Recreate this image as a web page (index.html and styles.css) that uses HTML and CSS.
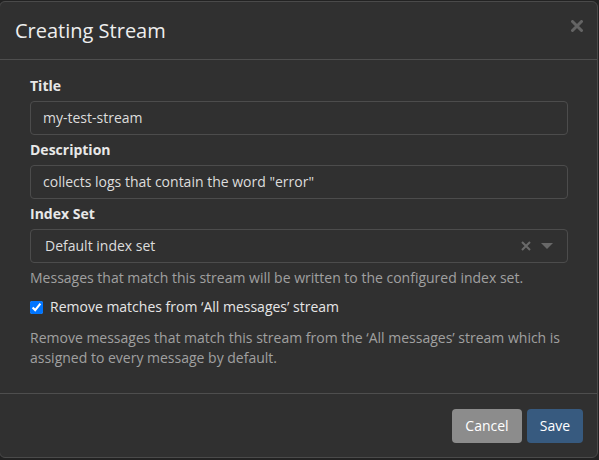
FILE: index.html
```html
<!DOCTYPE html>
<html>
<head>
<meta charset="utf-8">
<link rel="stylesheet" href="styles.css">
</head>
<body>
<div class="modal">
  <div class="modal-header">
    <h4 class="modal-title">Creating Stream</h4>
    <button class="close" aria-label="Close">
      <svg width="12" height="12" viewBox="0 0 12 12"><path d="M1.5 1.5 L10.5 10.5 M10.5 1.5 L1.5 10.5" stroke="#646464" stroke-width="3" stroke-linecap="round"/></svg>
    </button>
  </div>
  <div class="modal-body">
    <div class="form-group">
      <label class="label">Title</label>
      <div class="input">my-test-stream</div>
    </div>
    <div class="form-group">
      <label class="label">Description</label>
      <div class="input">collects logs that contain the word "error"</div>
    </div>
    <div class="form-group">
      <label class="label">Index Set</label>
      <div class="select">
        <span class="select-value">Default index set</span>
        <svg class="select-clear" width="10" height="10" viewBox="0 0 10 10"><path d="M1 1 L9 9 M9 1 L1 9" stroke="#6a6a6a" stroke-width="2"/></svg>
        <span class="select-caret"></span>
      </div>
      <p class="help">Messages that match this stream will be written to the configured index set.</p>
    </div>
    <div class="checkbox-row">
      <input type="checkbox" checked>
      <span>Remove matches from ‘All messages’ stream</span>
    </div>
    <p class="help help-block2">Remove messages that match this stream from the ‘All messages’ stream which is assigned to every message by default.</p>
  </div>
  <div class="modal-footer">
    <button class="btn btn-cancel">Cancel</button>
    <button class="btn btn-save">Save</button>
  </div>
</div>
</body>
</html>
```
FILE: styles.css
```css
html, body {
  margin: 0;
  padding: 0;
  background: #222222;
  font-family: "Open Sans", "Noto Sans", sans-serif;
  font-size: 14px;
  line-height: 20px;
  color: #dddddd;
}
.modal {
  box-sizing: border-box;
  margin: 1px 0 0 -1px;
  width: 599px;
  height: 457px;
  background: #303030;
  border: 1px solid #4a4a4a;
  border-radius: 6px;
  display: flex;
  flex-direction: column;
}
.modal-header {
  height: 58px;
  box-sizing: border-box;
  padding: 0 14px 0 15px;
  border-bottom: 1px solid #4e4e4e;
  display: flex;
  align-items: center;
  justify-content: space-between;
}
.modal-title {
  margin: 0;
  font-size: 20px;
  font-weight: normal;
  color: #eeeeee;
  line-height: 26px;
}
.close {
  background: none;
  border: 0;
  padding: 0;
  margin-top: -10px;
  display: flex;
}
.modal-body {
  flex: 1;
  padding: 16px 29px 0 30px;
}
.form-group {
  margin-bottom: 5px;
}
.label {
  display: block;
  font-weight: bold;
  margin-bottom: 5px;
  color: #e8e8e8;
}
.input, .select {
  box-sizing: border-box;
  height: 34px;
  border: 1px solid #4c4c4c;
  border-radius: 4px;
  background: #303030;
  padding: 6px 12px;
  color: #dddddd;
  width: 538px;
}
.select {
  display: flex;
  align-items: center;
  padding: 0 14px 0 14px;
}
.select-value {
  flex: 1;
}
.select-clear {
  margin-right: 10px;
}
.select-caret {
  width: 0;
  height: 0;
  border-left: 6px solid transparent;
  border-right: 6px solid transparent;
  border-top: 6px solid #686868;
}
.help {
  margin: 5px 0 0 0;
  color: #a0a0a0;
}
.checkbox-row {
  display: flex;
  align-items: center;
  margin-top: 9px;
  height: 20px;
  color: #e6e6e6;
}
.checkbox-row input {
  margin: 0 7px 0 0;
  width: 13px;
  height: 13px;
}
.help-block2 {
  margin-top: 11px;
}
.modal-footer {
  border-top: 1px solid #4e4e4e;
  padding: 15px 14px 14px 15px;
  display: flex;
  justify-content: flex-end;
  gap: 5px;
}
.btn {
  font-family: inherit;
  font-size: 14px;
  line-height: 20px;
  height: 34px;
  padding: 6px 12px;
  border: 0;
  border-radius: 4px;
  color: #ffffff;
}
.btn-cancel {
  background: #8c8c8c;
  width: 70px;
}
.btn-save {
  background: #375a7f;
  width: 56px;
}
```
